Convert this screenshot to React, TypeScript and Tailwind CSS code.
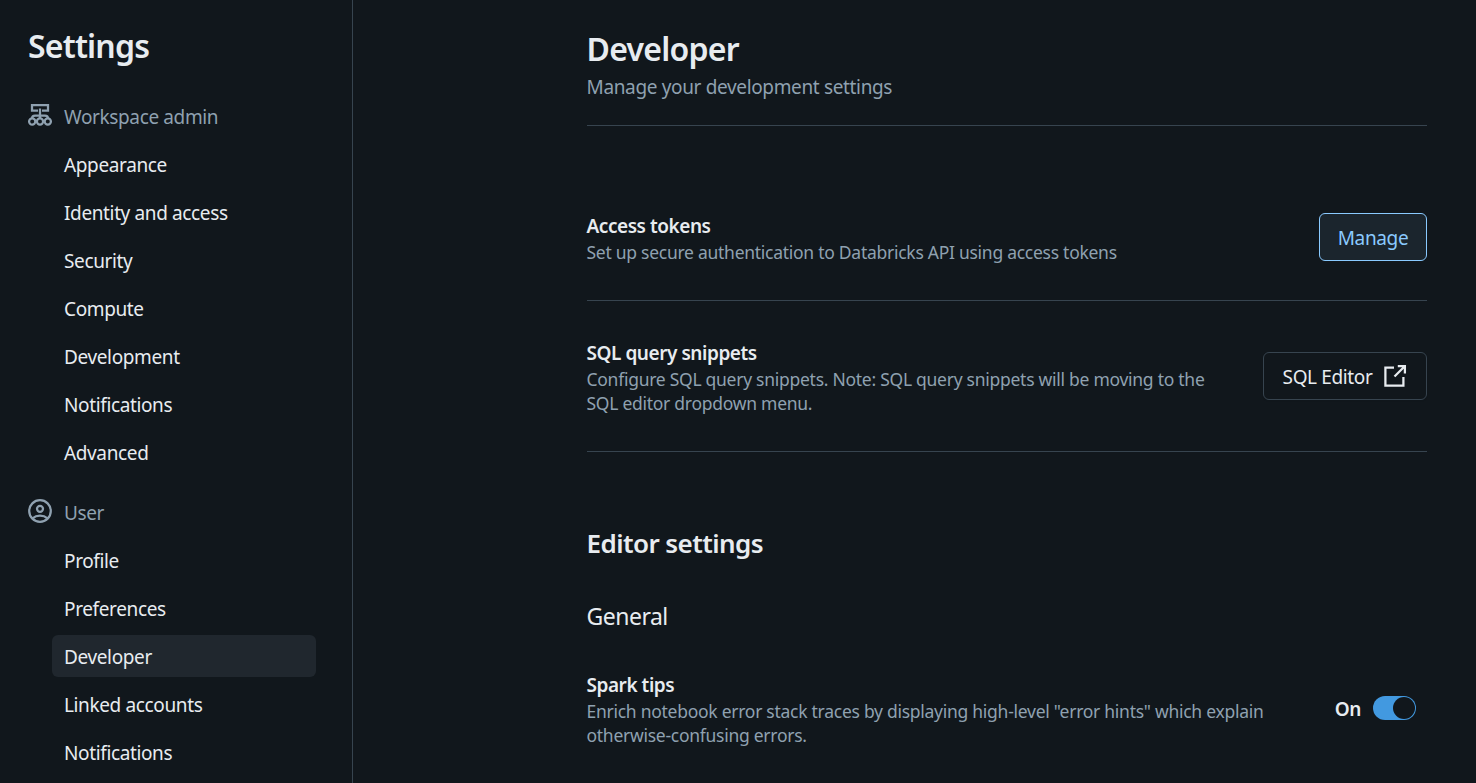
import React from 'react';

const WorkspacesIcon = () => (
  <svg width="24" height="24" viewBox="0 0 24 24" fill="none" stroke="currentColor" strokeWidth="2.250">
    <path d="M10 7.500H4V2.200h16v5.300h-6" />
    <path d="M12 5.500V15M4 15.500c0-2 1.200-3 3-3h10c1.800 0 3 1 3 3" />
    <circle cx="4.200" cy="18.500" r="3.100" />
    <circle cx="12" cy="18.500" r="3.100" />
    <circle cx="19.800" cy="18.500" r="3.100" />
  </svg>
);

const UserCircleIcon = () => (
  <svg width="24" height="24" viewBox="0 0 24 24" fill="none" stroke="currentColor" strokeWidth="2.250">
    <circle cx="12" cy="12" r="10.800" />
    <circle cx="12" cy="9.800" r="3" />
    <path d="M4.500 19.400c4.200-3.600 10.800-3.600 15 0" />
  </svg>
);

const NewWindowIcon = () => (
  <svg width="24" height="24" viewBox="0 0 24 24" fill="none" stroke="currentColor" strokeWidth="2.250">
    <path d="M11 3.600H2.400v18h18V13" />
    <path d="M14.800 2.100h7.100v7.400M21.700 2.300L11.500 12.500" />
  </svg>
);

const sections = [
  {
    title: 'Workspace admin',
    icon: <WorkspacesIcon />,
    items: ['Appearance', 'Identity and access', 'Security', 'Compute', 'Development', 'Notifications', 'Advanced'],
  },
  {
    title: 'User',
    icon: <UserCircleIcon />,
    items: ['Profile', 'Preferences', 'Developer', 'Linked accounts', 'Notifications'],
  },
];

const Sidebar = () => (
  <aside className="w-[353px] shrink-0 border-r border-[#37444f] pl-7 pr-9">
    <h1 className="mt-[26px] h-10 text-[32px] leading-10 font-semibold tracking-[-0.8px]">Settings</h1>
    <nav className="mt-[29px] flex flex-col gap-[18px]">
      {sections.map((section) => (
        <div key={section.title}>
          <div className="flex h-[42px] items-center gap-3 text-[#8fa1b0]">
            <span className="pb-0.5">{section.icon}</span>
            <span className="pt-[3px]">{section.title}</span>
          </div>
          <ul className="mt-1.5 ml-6 flex flex-col gap-1.5">
            {section.items.map((item) => (
              <li
                key={item}
                className={`flex h-[42px] items-center rounded-md px-3 pt-[3px] ${item === 'Developer' ? 'bg-[#20272e]' : ''}`}
              >
                {item}
              </li>
            ))}
          </ul>
        </div>
      ))}
    </nav>
  </aside>
);

type SettingProps = {
  title: string;
  description: string;
  className?: string;
  children: React.ReactNode;
};

const Setting = ({ title, description, className = '', children }: SettingProps) => (
  <div className={`flex items-center justify-between ${className}`}>
    <div className="mt-0.5 w-[690px] shrink-0">
      <h4 className="h-7 leading-7 font-semibold tracking-[-0.45px]">{title}</h4>
      <p className="text-[17.5px] leading-6 tracking-[-0.27px] whitespace-pre text-[#8fa1b0]">{description}</p>
    </div>
    {children}
  </div>
);

export default function App() {
  return (
    <div className="flex h-[783px] overflow-hidden bg-[#11171c] font-['Noto_Sans','Open_Sans',sans-serif] text-[19px] tracking-[-0.37px] text-[#e8ecf0]">
      <Sidebar />
      <main className="ml-[233.5px] w-[840.5px] shrink-0">
        <header className="h-[126px] border-b border-[#37444f] pt-[29px]">
          <h2 className="h-10 text-[32px] leading-10 font-semibold tracking-[-0.75px]">Developer</h2>
          <p className="mt-1 h-7 leading-7 tracking-[-0.35px] text-[#8fa1b0]">Manage your development settings</p>
        </header>

        <Setting
          title="Access tokens"
          description="Set up secure authentication to Databricks API using access tokens"
          className="mt-[50px] h-[125px] border-b border-[#37444f] pb-0.5"
        >
          <button className="h-12 w-[108px] shrink-0 rounded-md border border-[#8acaff] bg-[#1b252d] pt-[3px] text-[#8acaff]">
            Manage
          </button>
        </Setting>

        <Setting
          title="SQL query snippets"
          description={'Configure SQL query snippets. Note: SQL query snippets will be moving to the\nSQL editor dropdown menu.'}
          className="h-[151px] border-b border-[#37444f]"
        >
          <button className="-ml-10 flex h-12 w-[164px] shrink-0 items-center justify-center gap-[11px] rounded-md border border-[#37444f] shadow-xs">
            <span className="pt-[3px]">SQL Editor</span>
            <NewWindowIcon />
          </button>
        </Setting>

        <h3 className="mt-[73px] h-9 text-[26px] leading-9 font-semibold tracking-[-0.57px]">Editor settings</h3>
        <h4 className="mt-[39px] h-8 text-[23px] leading-8 tracking-[-0.5px]">General</h4>

        <Setting
          title="Spark tips"
          description={'Enrich notebook error stack traces by displaying high-level "error hints" which explain\notherwise-confusing errors.'}
          className="mt-[37px]"
        >
          <div className="mr-[11px] flex items-center gap-3">
            <span className="pt-[3px] font-semibold">On</span>
            <button className="flex h-6 w-[43px] justify-end rounded-full bg-[#4299e0] p-px" aria-label="Spark tips">
              <span className="size-[22px] rounded-full bg-[#11171c]" />
            </button>
          </div>
        </Setting>
      </main>
    </div>
  );
}
